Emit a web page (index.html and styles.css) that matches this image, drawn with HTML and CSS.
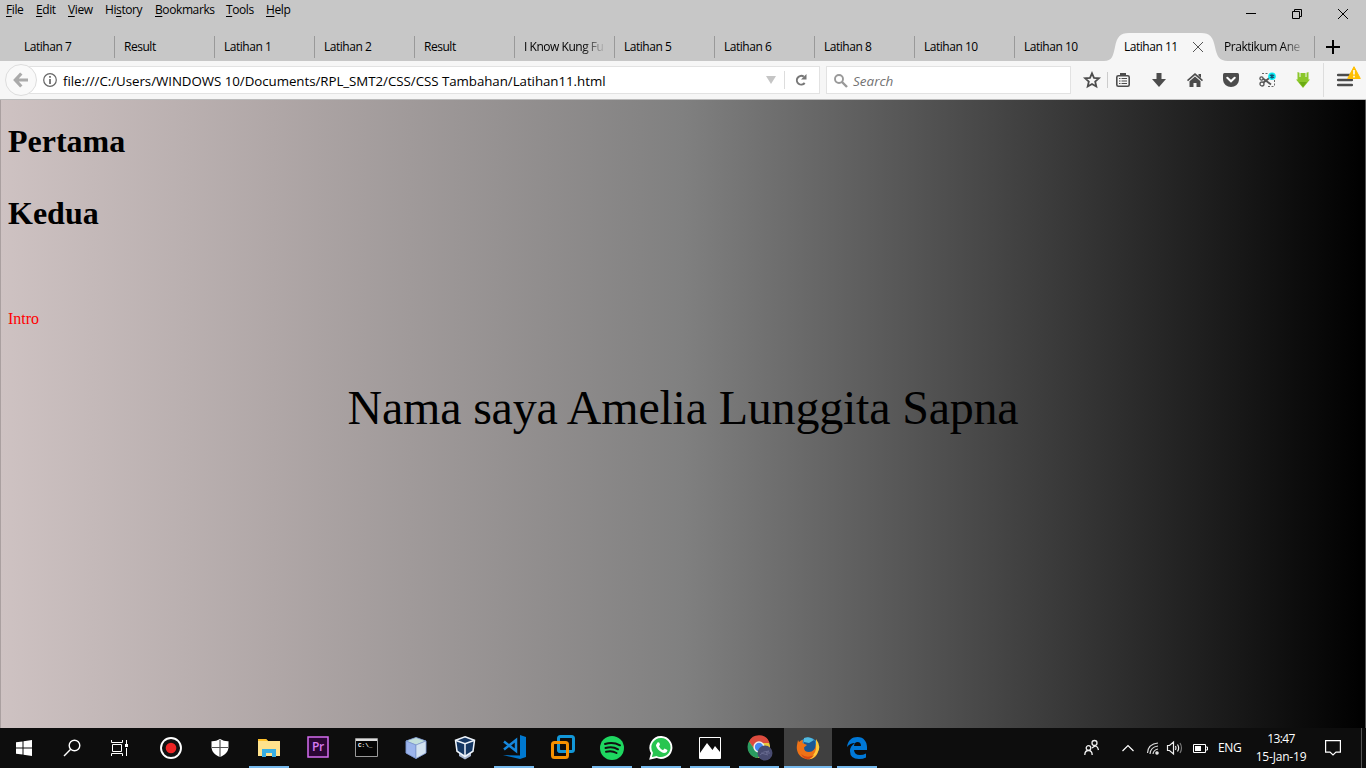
FILE: index.html
```html
<!DOCTYPE html>
<html lang="id">
<head>
<meta charset="utf-8">
<title>Latihan 11</title>
<link rel="stylesheet" href="styles.css">
</head>
<body>
<div class="window">
  <header class="titlebar">
    <nav class="menu">
      <span class="m-file"><u>F</u>ile</span><span class="m-edit"><u>E</u>dit</span><span class="m-view"><u>V</u>iew</span><span class="m-history">Hi<u>s</u>tory</span><span class="m-bookmarks"><u>B</u>ookmarks</span><span class="m-tools"><u>T</u>ools</span><span><u>H</u>elp</span>
    </nav>
    <div class="controls">
      <svg width="12" height="12" viewBox="0 0 12 12"><path d="M1 5.500h10" stroke="#000"/></svg>
      <svg width="12" height="12" viewBox="0 0 12 12" fill="none" stroke="#000"><path d="M1.500 3.500h7v7h-7zM3.500 3V1.500h7v7H9"/></svg>
      <svg width="12" height="12" viewBox="0 0 12 12" stroke="#000"><path d="M1 1l10 10M11 1L1 11"/></svg>
    </div>
  </header>
  <div class="tabs">
    <div class="tab"><span>Latihan 7</span></div>
    <div class="tab"><span>Result</span></div>
    <div class="tab"><span>Latihan 1</span></div>
    <div class="tab"><span>Latihan 2</span></div>
    <div class="tab"><span>Result</span></div>
    <div class="tab"><span class="fade">I Know Kung Fu</span></div>
    <div class="tab"><span>Latihan 5</span></div>
    <div class="tab"><span>Latihan 6</span></div>
    <div class="tab"><span>Latihan 8</span></div>
    <div class="tab"><span>Latihan 10</span></div>
    <div class="tab no-line"><span>Latihan 10</span></div>
    <div class="tab active no-line">
      <svg class="shape" width="124" height="28" viewBox="0 0 124 28"><path d="M0 28C8 28 9 23 11 14C13 4 16 0 25 0H97C106 0 109 4 111 14C113 23 115 28 124 28Z" fill="#f6f6f6"/></svg>
      <span>Latihan 11</span>
      <svg class="close" width="12" height="12" viewBox="0 0 12 12" stroke="#555"><path d="M1 1l10 10M11 1L1 11"/></svg>
    </div>
    <div class="tab"><span class="fade">Praktikum Ane</span></div>
    <svg class="plus" width="14" height="14" viewBox="0 0 14 14"><path d="M0 7h14M7 0v14" stroke="#000" stroke-width="2"/></svg>
  </div>
  <div class="toolbar">
    <div class="back"><svg width="16" height="16" viewBox="0 0 16 16" fill="none" stroke="#aaa" stroke-width="3.200"><path d="M8.300 1.500L2.300 8l6 6.500M2.500 8H15"/></svg></div>
    <div class="url">
      <svg class="info" width="14" height="14" viewBox="0 0 14 14"><circle cx="7" cy="7" r="6.300" fill="none" stroke="#666" stroke-width="1.200"/><path d="M7 3v1.800M7 6v5" stroke="#666" stroke-width="1.700"/></svg>
      <span class="address">file:///C:/Users/WINDOWS 10/Documents/RPL_SMT2/CSS/CSS Tambahan/Latihan11.html</span>
      <svg class="drop" width="10" height="8" viewBox="0 0 10 8"><path d="M0 0h10L5 8z" fill="#c5c5c5"/></svg>
      <i class="rule"></i>
      <svg class="reload" width="12" height="12" viewBox="0 0 12 12"><path d="M9.700 9A4.400 4.400 0 1 1 8.800 2.600" fill="none" stroke="#777" stroke-width="2"/><path d="M11.500 0v5.500H6z" fill="#777"/></svg>
    </div>
    <div class="search">
      <svg width="14" height="14" viewBox="0 0 14 14" fill="none" stroke="#999"><circle cx="5" cy="5" r="4" stroke-width="1.900"/><path d="M8 8l5 5" stroke-width="2.400"/></svg>
      <span>Search</span>
    </div>
    <div class="tools">
      <svg class="star" width="16" height="16" viewBox="0 0 16 16"><path d="M8 1.300l2 4.500 4.900.5-3.700 3.300 1.100 4.900L8 12l-4.300 2.500 1.100-4.900L1.100 6.300 6 5.800z" fill="none" stroke="#4c4c4c" stroke-width="1.800"/></svg>
      <i class="rule short"></i>
      <svg class="t-list" width="14" height="14" viewBox="0 0 14 14"><rect x=".8" y="2.800" width="12.400" height="10.400" rx="1.500" fill="none" stroke="#4c4c4c" stroke-width="1.600"/><path d="M4 0h6v3H4z" fill="#4c4c4c"/><path d="M3 5.500h1.500M5.500 5.500H11M3 8h1.500M5.500 8H11M3 10.500h1.500M5.500 10.500H11" stroke="#4c4c4c" stroke-width="1.200"/></svg>
      <svg class="t-down" width="14" height="14" viewBox="0 0 14 14"><path d="M4.500 0h5v6H14l-7 8-7-8h4.500z" fill="#4c4c4c"/></svg>
      <svg class="t-home" width="16" height="14" viewBox="0 0 16 14" fill="#4c4c4c"><path d="M8 0l8 7-1 1.200L8 2.200 1 8.200 0 7z"/><path d="M11.500 1H14v4l-2.500-2.200zM8 3.500l5.500 4.700V14H9.500v-4h-3v4h-4V8.200z"/></svg>
      <svg class="t-pocket" width="16" height="14" viewBox="0 0 16 14"><path d="M1.500 0h13Q16 0 16 1.500V6c0 10.500-16 10.500-16 0V1.500Q0 0 1.500 0z" fill="#4c4c4c"/><path d="M4.300 4.800L8 8.300l3.700-3.500" fill="none" stroke="#fff" stroke-width="2.100" stroke-linecap="round"/></svg>
      <svg class="t-cut" width="17" height="16" viewBox="0 0 17 16"><path d="M3 1.500h7M15.500 8v6M9 14.500h6" fill="none" stroke="#666" stroke-dasharray="2 1.500"/><path d="M4 6.500l8 6M4.500 10.500L11 5.500" stroke="#555" stroke-width="1.700"/><g fill="none" stroke="#555" stroke-width="1.300"><circle cx="3" cy="12" r="2"/><circle cx="2.500" cy="6.500" r="1.600"/></g><circle cx="13" cy="4.300" r="3.800" fill="#0df0f8"/><path d="M13 1.800v5M10.800 3l4.400 2.600M15.200 3l-4.400 2.600" stroke="#155777" stroke-width="1.200"/></svg>
      <svg class="t-green" width="16" height="16" viewBox="0 0 16 16"><path d="M2.500 0l2 .8V5h1V1h5v4h1V.8l2-.8v7.500H15L8 16 1 7.500h1.500z" fill="#8bc72a"/><path d="M4 10h8l-4 5z" fill="#6aab12"/></svg>
      <i class="rule tall"></i>
      <div class="burger"><svg width="16" height="14" viewBox="0 0 16 14"><path d="M1.200 2h13.600M1.200 7h13.600M1.200 12h13.600" stroke="#4c4c4c" stroke-width="2.600" stroke-linecap="round"/></svg>
      <svg class="warn" width="14" height="13" viewBox="0 0 14 13"><path d="M7 .7L13.300 12.500H.7z" fill="#ffbf00" stroke="#ffbf00" stroke-linejoin="round"/><path d="M7 4v4.500M7 9.800v1.700" stroke="#fff" stroke-width="1.600"/></svg></div>
    </div>
  </div>
  <main class="page">
    <h1>Pertama</h1>
    <h1>Kedua</h1>
    <p class="intro">Intro</p>
    <p class="name">Nama saya Amelia Lunggita Sapna</p>
  </main>
  <footer class="taskbar">
    <div class="sys"><svg width="16" height="16" viewBox="0 0 16 16" fill="#fff"><path d="M0 2.300l6.500-.9v6H0zM7.500 1.200L16 0v7.400H7.500zM0 8.500h6.500v6L0 13.700zM7.500 8.500H16V16l-8.500-1.200z"/></svg></div>
    <div class="sys"><svg width="18" height="18" viewBox="0 0 18 18" fill="none" stroke="#fff" stroke-width="1.400"><circle cx="11.500" cy="6.500" r="5.300"/><path d="M7.700 10.300L1 17"/></svg></div>
    <div class="sys"><svg class="taskview" width="17" height="16" viewBox="0 0 17 16" fill="none" stroke="#fff"><path d="M.5 0v2.500h11V0M.5 16v-2.500h11V16M1.500 4.500h9v7h-9zM15.500 0v4M15.500 8v8"/><path d="M14 4h3v3h-3z" fill="#fff" stroke="none"/></svg></div>
    <div class="app first"><svg width="24" height="24" viewBox="0 0 24 24"><circle cx="12" cy="12" r="10" fill="#111" stroke="#fff" stroke-width="1.900"/><circle cx="12" cy="12" r="5.300" fill="#ee2424"/></svg></div>
    <div class="app"><svg width="18" height="18" viewBox="0 0 18 18"><path d="M9 0q4 2.500 8.500 2.300v5.500C17.500 13 14 16 9 18 4 16 .5 13 .5 7.800V2.300Q5 2.500 9 0z" fill="#fff"/><path d="M9 1v17M1 8.500h16" stroke="#555" stroke-width="1.200"/></svg></div>
    <div class="app open"><svg width="22" height="20" viewBox="0 0 22 20"><path d="M0 1h8l2 2h11v15H0z" fill="#f4ba35"/><path d="M0 3h22v15H0z" fill="#ffe28c"/><path d="M0 1h8l2 2H0z" fill="#ffc12b"/><path d="M4 19v-8h14v8h-4v-4H8v4z" fill="#37afe4"/></svg></div>
    <div class="app pr"><svg width="22" height="22" viewBox="0 0 22 22"><rect x="1" y="1" width="20" height="20" fill="#2a0634" stroke="#d56cf0" stroke-width="1.500"/><text x="5" y="15" class="pr-text">Pr</text></svg></div>
    <div class="app cmd"><svg width="24" height="20" viewBox="0 0 24 20"><path d="M.5.500h22v18H.5z" fill="#050505" stroke="#999"/><path d="M1 1h21v2H1z" fill="#ddd"/><text x="3" y="9" class="cmd-text">C:\_</text></svg></div>
    <div class="app"><svg width="24" height="24" viewBox="0 0 24 24" stroke="#7089c4" stroke-width=".6"><path d="M12 1.500l10 3.500v12l-10 5.500L2 17V5z" fill="#b6cff5"/><path d="M2 5l10-3.500L22 5l-10 4z" fill="#c3dfdb"/><path d="M2 5l10 4v13.500L2 17z" fill="#9bb4ec"/><path d="M12 9l10-4v12l-10 5.500z" fill="#d3e2f0"/></svg></div>
    <div class="app"><svg width="22" height="24" viewBox="0 0 22 24"><path d="M5 16v4l6 3.500 6-3.500v-4" fill="#aab8d2"/><path d="M11 .7l9.500 3.500-1.500 11-8 5.300L3 15.200 1.500 4.200z" fill="#153763" stroke="#eef4fb" stroke-width="1.500"/><path d="M2 4.500l9 3.200 9-3.200M11 8v12" fill="none" stroke="#eef4fb" stroke-width="1.500"/></svg></div>
    <div class="app open code"><svg width="24" height="24" viewBox="0 0 24 24"><path d="M18 0l6 2v20l-6 2-17-4 17 .5z" fill="#0078cf"/><path d="M2 6.500l12 9.500V5L2 14.500" fill="none" stroke="#1687dc" stroke-width="2.500"/></svg></div>
    <div class="app vm"><svg width="24" height="24" viewBox="0 0 24 24" fill="none" stroke-width="3"><rect x="7.500" y="1.500" width="15" height="15" rx="2" stroke="#1297d8"/><rect x="1.500" y="7.500" width="15" height="15" rx="2" stroke="#f59100"/><path d="M7.500 6v8q0 2.500 2 2.500H14" stroke="#1297d8"/><path d="M5 7.500h8" stroke="#f59100"/></svg></div>
    <div class="app open"><svg width="24" height="24" viewBox="0 0 24 24"><circle cx="12" cy="12" r="12" fill="#1ed760"/><path d="M5 8q8-2.500 15 1.300M5.500 12q7-2 12.500 1.300M6 15.800q6-1.500 10.500 1.200" fill="none" stroke="#111" stroke-width="2" stroke-linecap="round"/></svg></div>
    <div class="app open"><svg width="24" height="24" viewBox="0 0 24 24"><path d="M12.500 1a10.500 10.500 0 1 1-5 20L1.500 22.500 3 17A10.500 10.500 0 0 1 12.500 1z" fill="#28c550" stroke="#fff" stroke-width="1.900"/><path d="M8.500 6.500q2-.7 2.500 2l-1 2q1.300 2.500 4 3.700l1.500-1.700 3 1.500q-.4 3-3.500 3C10 16 7 11 7 9z" fill="#fff"/></svg></div>
    <div class="app open"><svg width="22" height="22" viewBox="0 0 22 22"><path d="M.5.500h21v21H.5z" fill="#0c0c0c" stroke="#fff"/><path d="M1 16l7-10 5.500 7L16 9l5 6v6H1z" fill="#fff"/></svg></div>
    <div class="app open chrome"><svg width="26" height="26" viewBox="0 0 26 26"><circle cx="12" cy="12" r="11" fill="#e9c53c"/><path d="M2 6.500A11 11 0 0 1 22.500 8H12a5 5 0 0 0-4.600 6z" fill="#dc4b3e"/><path d="M2 6.500A11 11 0 0 0 11 23l4-7-7-1z" fill="#299b60"/><circle cx="12" cy="12" r="4.900" fill="#4587f3" stroke="#eee" stroke-width="1.500"/><circle cx="18" cy="18" r="7.500" fill="#484b70"/><path d="M13 20q3-4 9-4l-3 2h4M14 18l7 2" stroke="#686b90" fill="none"/></svg></div>
    <div class="app open focused"><svg width="24" height="24" viewBox="0 0 24 24"><circle cx="12.500" cy="11.500" r="10" fill="#2d8dcc"/><path d="M8 3q7-3 11 2l1 8-5 5-7-3z" fill="#1b5794"/><path d="M8 2Q14 0 18 4l-5 3-5-1z" fill="#51b9df"/><path d="M2 4l1 2q2-2 4-2l-.5 3L11 9l-3 2.500q0 4.500 5 4.500 6 0 7-8 4 7 0 12-4 4-10 3C2 21 0 14 1 9z" fill="#ee7216"/><path d="M20 3q6 8 1 15-4 6-9 5 7-4 8-10z" fill="#ffc93a"/><path d="M5 18q6 5 13 1-3 5-8 4-3-1-5-5z" fill="#d94a12"/></svg></div>
    <div class="app open"><svg width="22" height="22" viewBox="0 0 22 22"><path d="M1 10C2 3 6 0 11.500 0 18 0 21 5 21 10v3H8q.3 5 6 5 3 0 6-1.500v4Q17 22 13 22 4 22 4 14q0-5 5-8-5 0-8 4zM8 9h7q0-4-3.500-4Q8.500 5 8 9z" fill="#0078d7"/></svg></div>
    <div class="tray">
      <svg class="people" width="16" height="16" viewBox="0 0 16 16" fill="none" stroke="#eee" stroke-width="1.300"><circle cx="10.500" cy="3" r="2.500"/><circle cx="4.500" cy="8" r="2.300"/><path d="M.8 15q0-4.500 3.700-4.500T8.200 15M8 8q5-4.500 6.500 2"/></svg>
      <svg class="up" width="12" height="8" viewBox="0 0 12 8" fill="none" stroke="#fff" stroke-width="1.200"><path d="M.5 7L6 1.500 11.500 7"/></svg>
      <svg class="wifi" width="14" height="14" viewBox="0 0 14 14" fill="none" stroke="#ddd" stroke-width="1.200"><path d="M1.500 12Q2 3 12 2M4 13Q4.500 6 12 5M7 13Q7.500 9 12 8"/><circle cx="11" cy="12" r="1.200" fill="#fff"/></svg>
      <svg class="sound" width="16" height="14" viewBox="0 0 16 14" fill="none" stroke="#eee" stroke-width="1.200"><path d="M.5 4.500h2l4-3.500v12l-4-3.500h-2zM8.500 5q1 2 0 4M10.500 3.500q2.300 3.500 0 7"/><path d="M13 2q3 5 0 10" stroke="#777"/></svg>
      <svg class="battery" width="15" height="9" viewBox="0 0 15 9"><path d="M.5.500h12v8H.5zM13 3h1.500v3H13" fill="none" stroke="#fff"/><path d="M2 2h6v5H2z" fill="#fff"/></svg>
      <span class="lang">ENG</span>
      <div class="clock"><span class="time">13:47</span><span class="date">15-Jan-19</span></div>
      <svg class="notice" width="16" height="16" viewBox="0 0 16 16" fill="none" stroke="#fff" stroke-width="1.200"><path d="M.6.600h14.800v11.500H11L8 15l-3-2.900H.6z"/></svg>
      <i class="desktop"></i>
    </div>
  </footer>
</div>
</body>
</html>
```
FILE: styles.css
```css
* { box-sizing: border-box; }
body { margin: 0; overflow: hidden; font: 12px/16px "Open Sans", "Noto Sans", sans-serif; color: #000; }
svg { display: block; flex: none; overflow: visible; }
.window { width: 1366px; height: 768px; display: flex; flex-direction: column; background: #c7c7c7; }
.titlebar { height: 33px; display: flex; justify-content: space-between; }
.menu { display: flex; padding: 2px 0 0 6px; font-size: 12px; letter-spacing: -.4px; white-space: nowrap; }
.menu span { width: 40px; }
.menu u { text-underline-offset: 2px; }
.menu .m-file { width: 30px; }
.menu .m-edit { width: 32px; }
.menu .m-view { width: 37px; }
.menu .m-history { width: 50px; }
.menu .m-bookmarks { width: 71px; }
.controls { display: flex; gap: 34px; padding: 8px 17px 0 0; }
.tabs { height: 28px; display: flex; padding-left: 15px; font-size: 12px; letter-spacing: -.47px; }
.tab { width: 100px; height: 28px; flex: none; position: relative; padding: 6px 0 0 9px; white-space: nowrap; }
.tab::after { content: ""; position: absolute; right: 0; top: 3px; width: 1px; height: 22px; background: #999; }
.tab.no-line::after { display: none; }
.tab span { display: block; width: 84px; position: relative; overflow: hidden; }
.tab .fade { width: 80px; -webkit-mask-image: linear-gradient(90deg, #000 58px, transparent 82px); mask-image: linear-gradient(90deg, #000 58px, transparent 82px); }
.shape { position: absolute; left: -11px; top: 0; }
.close { position: absolute; left: 77px; top: 8px; }
.plus { margin: 7px 0 0 11px; }
.toolbar { height: 39px; display: flex; align-items: center; background: #f6f6f6; border-bottom: 1px solid #bbb; padding-left: 5px; }
.back { width: 32px; height: 32px; border: 1px solid #ddd; border-radius: 50%; background: #f9f9f9; display: grid; place-items: center; z-index: 1; }
.url { width: 791px; height: 28px; margin-left: -8px; padding: 0 12px 0 13px; display: flex; align-items: center; background: #fff; border: 1px solid #e2e2e2; }
.address { margin-left: 6px; padding-top: 2px; font-size: 13.300px; letter-spacing: -.04px; white-space: nowrap; }
.drop { margin-left: auto; }
.rule { width: 1px; height: 18px; background: #ddd; margin: 0 10px 0 8px; flex: none; }
.search { width: 245px; height: 28px; margin-left: 6px; padding: 1px 0 0 7px; display: flex; gap: 5px; align-items: center; background: #fff; border: 1px solid #e2e2e2; color: #737373; font-size: 13.500px; font-style: italic; }
.tools { display: flex; align-items: center; flex: 1; height: 38px; }
.star { margin-left: 13px; }
.rule.short { margin: 0 8px 0 7px; height: 16px; background: #ccc; }
.t-down { margin-left: 22px; }
.t-home { margin-left: 21px; }
.t-pocket { margin-left: 20px; }
.t-cut { margin-left: 20px; }
.t-green { margin-left: 19px; }
.rule.tall { height: 34px; margin: 0 13px 0 12px; }
.burger { position: relative; }
.warn { position: absolute; left: 10px; top: -7px; }
.page { height: 628px; border-left: 1px solid #aaa0a0; border-right: 1px solid #555; background: linear-gradient(90deg, #cec2c2, #b0a7a7 20%, #808080 50%, #000); font-family: "Liberation Serif", serif; overflow: hidden; padding: 1px 7px 0; }
.page h1 { margin: 22px 0 35px; font-size: 32px; line-height: 37px; font-weight: bold; }
.page h1 + h1 { margin: 0; }
.intro { margin: 78px 0 0; font-size: 16px; line-height: 18px; color: #f00; }
.name { margin: 52px 0 0; font-size: 48px; line-height: 56px; letter-spacing: -.2px; text-align: center; white-space: nowrap; }
.taskbar { height: 40px; background: #0d0d0d; display: flex; color: #fff; }
.sys { width: 48px; display: grid; place-items: center; }
.sys .taskview { margin-right: 1px; }
.app { width: 49px; height: 40px; position: relative; display: grid; place-items: center; padding-right: 2px; }
.app.first { margin-left: 3px; }
.app.pr, .app.vm, .app.code { padding-bottom: 2px; }
.app.chrome { padding: 0 0 0 1px; }
.app.open::after { content: ""; position: absolute; left: 4px; bottom: 0; width: 40px; height: 2px; background: #76b9ed; }
.app.focused::before { content: ""; position: absolute; left: 0; top: 0; width: 48px; height: 40px; background: #404040; }
.app.focused::after { left: 0; width: 48px; }
.app svg { position: relative; }
.pr-text { font: 600 12px "Open Sans", sans-serif; fill: #d87af3; letter-spacing: -.5px; }
.cmd-text { font: bold 6px "Liberation Mono", monospace; fill: #fff; }
.tray { flex: 1; display: flex; align-items: center; justify-content: flex-end; }
.up { margin-left: 22px; }
.wifi { margin-left: 12px; }
.sound { margin-left: 7px; }
.battery { margin-left: 10px; }
.lang { width: 24px; margin-left: 10px; letter-spacing: -.4px; }
.clock { width: 54px; margin-left: 12px; display: flex; flex-direction: column; align-items: center; line-height: 18px; font-size: 12px; letter-spacing: -.2px; white-space: nowrap; }
.clock .time { letter-spacing: -.6px; }
.notice { margin-left: 17px; }
.desktop { width: 1px; height: 40px; background: #555; margin: 0 4px 0 20px; }
```
